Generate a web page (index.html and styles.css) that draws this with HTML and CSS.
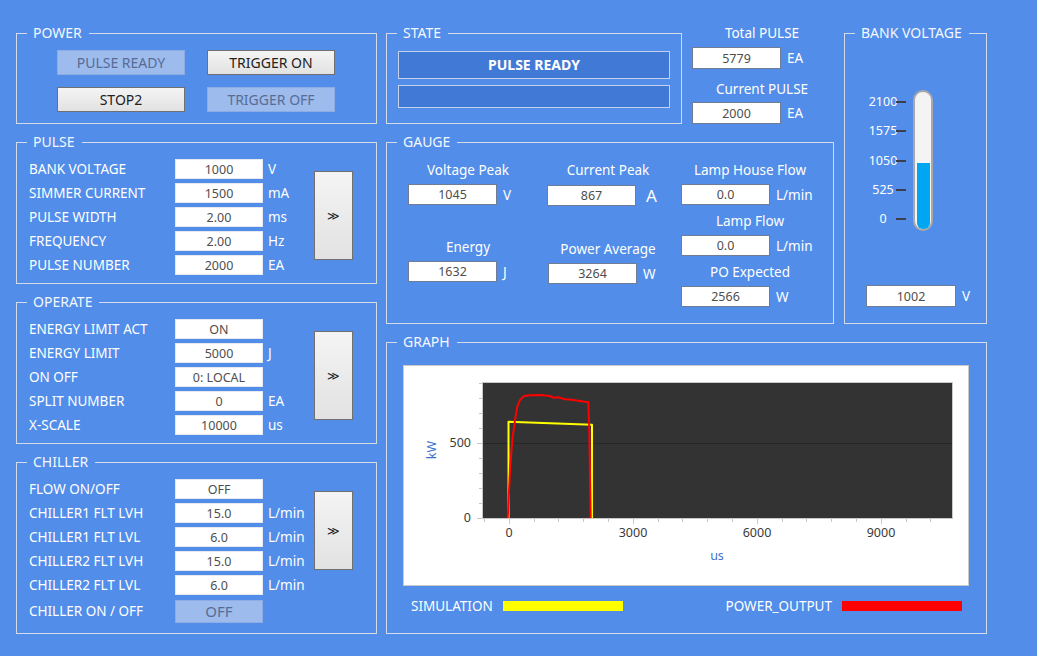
FILE: index.html
```html
<!DOCTYPE html>
<html lang="en">
  <head>
    <meta charset="UTF-8" />
    <meta name="viewport" content="width=device-width, initial-scale=1.0" />
    <title>Pulse Control</title>
    <link rel="stylesheet" href="styles.css">
  </head>
  <body>
    <div class="page">
      <div class="col-left">
        <fieldset class="group power">
          <legend>POWER</legend>
          <div class="power-grid">
            <button class="btn off">PULSE READY</button>
            <button class="btn">TRIGGER ON</button>
            <button class="btn">STOP2</button>
            <button class="btn off">TRIGGER OFF</button>
          </div>
        </fieldset>

        <fieldset class="group pulse">
          <legend>PULSE</legend>
          <div class="params">
            <div class="rows">
              <div class="row"><span>BANK VOLTAGE</span><input type="text" value="1000" readonly /><span class="unit">V</span></div>
              <div class="row"><span>SIMMER CURRENT</span><input type="text" value="1500" readonly /><span class="unit">mA</span></div>
              <div class="row"><span>PULSE WIDTH</span><input type="text" value="2.00" readonly /><span class="unit">ms</span></div>
              <div class="row"><span>FREQUENCY</span><input type="text" value="2.00" readonly /><span class="unit">Hz</span></div>
              <div class="row"><span>PULSE NUMBER</span><input type="text" value="2000" readonly /><span class="unit">EA</span></div>
            </div>
            <button class="btn send">&#8811;</button>
          </div>
        </fieldset>

        <fieldset class="group operate">
          <legend>OPERATE</legend>
          <div class="params">
            <div class="rows">
              <div class="row"><span>ENERGY LIMIT ACT</span><input type="text" value="ON" readonly /><span class="unit"></span></div>
              <div class="row"><span>ENERGY LIMIT</span><input type="text" value="5000" readonly /><span class="unit">J</span></div>
              <div class="row"><span>ON OFF</span><input type="text" value="0: LOCAL" readonly /><span class="unit"></span></div>
              <div class="row"><span>SPLIT NUMBER</span><input type="text" value="0" readonly /><span class="unit">EA</span></div>
              <div class="row"><span>X-SCALE</span><input type="text" value="10000" readonly /><span class="unit">us</span></div>
            </div>
            <button class="btn send">&#8811;</button>
          </div>
        </fieldset>

        <fieldset class="group chiller">
          <legend>CHILLER</legend>
          <div class="params">
            <div class="rows">
              <div class="row"><span>FLOW ON/OFF</span><input type="text" value="OFF" readonly /><span class="unit"></span></div>
              <div class="row"><span>CHILLER1 FLT LVH</span><input type="text" value="15.0" readonly /><span class="unit">L/min</span></div>
              <div class="row"><span>CHILLER1 FLT LVL</span><input type="text" value="6.0" readonly /><span class="unit">L/min</span></div>
              <div class="row"><span>CHILLER2 FLT LVH</span><input type="text" value="15.0" readonly /><span class="unit">L/min</span></div>
              <div class="row"><span>CHILLER2 FLT LVL</span><input type="text" value="6.0" readonly /><span class="unit">L/min</span></div>
              <div class="row last"><span>CHILLER ON / OFF</span><button class="btn off toggle">OFF</button><span class="unit"></span></div>
            </div>
            <button class="btn send short">&#8811;</button>
          </div>
        </fieldset>
      </div>

      <div class="col-right">
        <div class="top-area">
          <div class="mid">
            <div class="state-row">
              <fieldset class="group state">
                <legend>STATE</legend>
                <div class="state-body">
                  <div class="state-bar main">PULSE READY</div>
                  <div class="state-bar"></div>
                </div>
              </fieldset>
              <div class="counters">
                <div class="counter-label">Total PULSE</div>
                <div class="counter-row"><input class="box" type="text" value="5779" readonly /><span>EA</span></div>
                <div class="counter-label second">Current PULSE</div>
                <div class="counter-row tight"><input class="box" type="text" value="2000" readonly /><span>EA</span></div>
              </div>
            </div>

            <fieldset class="group gauge">
              <legend>GAUGE</legend>
              <div class="gauge-body">
                <div class="gcol c1">
                  <div class="field">
                    <div class="glabel">Voltage Peak</div>
                    <div class="gline"><input class="box" type="text" value="1045" readonly /><span>V</span></div>
                  </div>
                  <div class="field far">
                    <div class="glabel">Energy</div>
                    <div class="gline"><input class="box" type="text" value="1632" readonly /><span>J</span></div>
                  </div>
                </div>
                <div class="gcol c2">
                  <div class="field">
                    <div class="glabel">Current Peak</div>
                    <div class="gline"><input class="box" type="text" value="867" readonly /><span class="big">A</span></div>
                  </div>
                  <div class="field far">
                    <div class="glabel">Power Average</div>
                    <div class="gline"><input class="box shift" type="text" value="3264" readonly /><span>W</span></div>
                  </div>
                </div>
                <div class="gcol c3">
                  <div class="field">
                    <div class="glabel">Lamp House Flow</div>
                    <div class="gline"><input class="box" type="text" value="0.0" readonly /><span>L/min</span></div>
                  </div>
                  <div class="field near">
                    <div class="glabel">Lamp Flow</div>
                    <div class="gline"><input class="box" type="text" value="0.0" readonly /><span>L/min</span></div>
                  </div>
                  <div class="field near">
                    <div class="glabel">PO Expected</div>
                    <div class="gline"><input class="box" type="text" value="2566" readonly /><span>W</span></div>
                  </div>
                </div>
              </div>
            </fieldset>
          </div>

          <fieldset class="group bank">
            <legend>BANK VOLTAGE</legend>
            <svg class="thermo" width="141" height="200" viewBox="0 0 141 200">
              <g class="scale-text">
                <text x="38" y="64">2100</text>
                <text x="38" y="93">1575</text>
                <text x="38" y="123">1050</text>
                <text x="38" y="152">525</text>
                <text x="38" y="181">0</text>
              </g>
              <path d="M51 60h10M51 89h10M51 119h10M51 148h10M51 177h10" stroke="#3a3f4a" stroke-width="2" />
              <rect x="69" y="49" width="18" height="139" rx="9" fill="#f4f4f4" stroke="#a9a9a9" stroke-width="2" />
              <rect x="72" y="121" width="13" height="66" rx="6" fill="#00a6f2" />
              <rect x="72" y="121" width="13" height="12" fill="#00a6f2" />
            </svg>
            <div class="bank-row"><input class="box" type="text" value="1002" readonly /><span>V</span></div>
          </fieldset>
        </div>

        <fieldset class="group graph">
          <legend>GRAPH</legend>
          <div class="chart">
            <svg width="566" height="221" viewBox="0 0 566 221">
              <defs>
                <clipPath id="plot-clip"><rect x="80" y="18" width="469" height="135" /></clipPath>
              </defs>
              <rect x="79.5" y="17.5" width="470" height="136" fill="#333333" stroke="#c8c8c8" />
              <path d="M80 78.5h469" stroke="#262626" />
              <path d="M74 153.5h5M74 78.5h5M76 138.5h3M76 123.5h3M76 108.5h3M76 93.5h3M76 63.5h3M76 48.5h3M76 33.5h3M76 18.5h3" stroke="#c8c8c8" />
              <path d="M81.5 154v3M106.5 154v5M131.5 154v3M155.5 154v3M180.5 154v3M205.5 154v3M230.5 154v5M255.5 154v3M279.5 154v3M304.5 154v3M329.5 154v3M354.5 154v5M379.5 154v3M403.5 154v3M428.5 154v3M453.5 154v3M478.5 154v5M503.5 154v3M527.5 154v3" stroke="#c8c8c8" />
              <g class="axis-text">
                <text x="68" y="82" text-anchor="end">500</text>
                <text x="68" y="157" text-anchor="end">0</text>
                <text x="106" y="172" text-anchor="middle">0</text>
                <text x="230" y="172" text-anchor="middle">3000</text>
                <text x="354" y="172" text-anchor="middle">6000</text>
                <text x="478" y="172" text-anchor="middle">9000</text>
              </g>
              <text class="axis-title" x="0" y="0" text-anchor="middle" transform="translate(33 85) rotate(-90)">kW</text>
              <text class="axis-title" x="314" y="195" text-anchor="middle">us</text>
              <g clip-path="url(#plot-clip)" fill="none" stroke-width="2" stroke-linejoin="round">
                <polyline stroke="#ffff00" points="105.5,154 105.5,56.7 189,59.7 189,154" />
                <polyline stroke="#ff0000" points="104.7,154 107,105 109.3,75 112,55 114.3,41.7 117,35 121,31 127,30.3 137,30 147,31 150.3,32.7 155.3,32.3 162,34.3 168.7,34.7 177,36 183.7,37 185.3,37 186.3,65 187.7,154" />
              </g>
            </svg>
          </div>
          <div class="legend">
            <div class="legend-item"><span>SIMULATION</span><i class="swatch sim"></i></div>
            <div class="legend-item"><span>POWER_OUTPUT</span><i class="swatch out"></i></div>
          </div>
        </fieldset>
      </div>
    </div>
  </body>
</html>
```

FILE: styles.css
```css
body {
  margin: 0;
  width: 1037px;
  height: 656px;
  overflow: hidden;
  background-color: #518de9;
  font-family: "Noto Sans", "Open Sans", sans-serif;
  font-size: 13.5px;
  color: #ffffff;
}

.page {
  display: flex;
  gap: 9px;
  padding: 24px 0 0 16px;
}

/* group boxes */

.group {
  margin: 0;
  padding: 0;
  min-width: 0;
  box-sizing: border-box;
  border: 1px solid #d3dbe7;
}

.group legend {
  margin-left: 10px;
  padding: 0 7px 0 6px;
  font-size: 14px;
  line-height: 18px;
  color: #f4f7ff;
}

.col-left {
  width: 361px;
  display: flex;
  flex-direction: column;
  gap: 9px;
}

.power { height: 100px; }
.pulse, .operate { height: 151px; }
.chiller { height: 181px; }

.col-right {
  width: 601px;
  display: flex;
  flex-direction: column;
  gap: 9px;
}

.top-area {
  display: flex;
  gap: 10px;
  height: 300px;
}

.mid {
  width: 448px;
  display: flex;
  flex-direction: column;
  gap: 9px;
}

.state-row {
  display: flex;
  height: 100px;
}

.state { width: 296px; height: 100px; }
.gauge { height: 191px; }
.bank { width: 143px; height: 300px; }
.graph { height: 301px; }

/* buttons and boxes */

.btn {
  box-sizing: border-box;
  padding: 0;
  font-family: inherit;
  font-size: 14px;
  color: #222222;
  background: linear-gradient(#f4f4f4, #e2e2e2);
  border: 1px solid #707070;
  border-radius: 0;
}

.btn.off {
  background: #9dbbed;
  border: 1px solid #8cace3;
  color: #586c94;
}

input {
  box-sizing: border-box;
  height: 20px;
  padding: 0;
  margin: 0;
  font-family: inherit;
  font-size: 12.5px;
  color: #4e4e4e;
  text-align: center;
  background: #ffffff;
  border: 1px solid #e3e8f1;
  outline: none;
}

input.box {
  height: 22px;
  border: 1px solid #6f7c93;
}

.power-grid {
  display: grid;
  grid-template-columns: 128px 128px;
  grid-auto-rows: 25px;
  column-gap: 22px;
  row-gap: 12px;
  padding: 8px 0 0 40px;
}

/* parameter lists */

.params {
  display: flex;
  padding: 6px 0 0 12px;
}

.rows {
  width: 285px;
}

.row {
  display: grid;
  grid-template-columns: 146px 88px 1fr;
  align-items: center;
  height: 24px;
}

.row input {
  width: 88px;
}

.row .unit {
  padding-left: 5px;
}

.row.last {
  height: 28px;
}

.toggle {
  height: 23px;
  font-size: 15px;
  color: #50607e;
}

.send {
  width: 39px;
  height: 89px;
  margin-top: 14px;
  font-size: 12px;
}

.send.short {
  height: 79px;
}

/* state */

.state-body {
  padding: 9px 0 0 11px;
}

.state-bar {
  box-sizing: border-box;
  width: 272px;
  height: 23px;
  margin-top: 6px;
  background: #417ad6;
  border: 1px solid #c6d2e8;
}

.state-bar.main {
  height: 28px;
  margin-top: 0;
  font-size: 14px;
  font-weight: bold;
  line-height: 26px;
  text-align: center;
}

.counters {
  width: 140px;
  margin-left: 10px;
}

.counter-label {
  line-height: 18px;
  text-align: center;
}

.counter-label.second {
  margin-top: 11px;
}

.counter-row {
  display: flex;
  align-items: center;
  gap: 6px;
  margin-top: 5px;
}

.counter-row.tight {
  margin-top: 4px;
}

.counter-row input {
  width: 89px;
}

/* gauge */

.gauge-body {
  display: flex;
  padding: 10px 0 0 21px;
}

.gcol.c1 { width: 120px; }
.gcol.c2 { width: 122px; margin-left: 19px; }
.gcol.c3 { width: 138px; margin-left: 12px; }

.glabel {
  line-height: 18px;
  text-align: center;
  white-space: nowrap;
}

.gline {
  display: flex;
  align-items: center;
  gap: 6px;
  margin-top: 5px;
}

.gline input {
  width: 89px;
  height: 21px;
}

.gline input.shift {
  margin-left: 1px;
}

.gline .big {
  margin-left: 4px;
  font-size: 17px;
}

.field.far {
  margin-top: 33px;
}

.field.near {
  margin-top: 7px;
}

/* bank voltage */

.thermo {
  display: block;
}

.scale-text text {
  font-size: 12.5px;
  fill: #ffffff;
  text-anchor: middle;
}

.bank-row {
  display: flex;
  align-items: center;
  gap: 6px;
  margin: 43px 0 0 21px;
}

.bank-row input {
  width: 90px;
}

/* graph */

.chart {
  width: 566px;
  height: 221px;
  margin: 14px 0 0 16px;
  box-sizing: border-box;
  background: #ffffff;
  border: 1px solid #c9c9c9;
}

.chart svg {
  display: block;
  margin: -1px 0 0 -1px;
}

.axis-text text {
  font-size: 12.5px;
  fill: #3b3b3b;
}

.axis-title {
  font-size: 12.5px;
  fill: #3c72cf;
}

.legend {
  display: flex;
  justify-content: space-between;
  padding: 0 24px 0 24px;
  margin-top: 11px;
}

.legend-item {
  display: flex;
  align-items: center;
  gap: 10px;
  line-height: 18px;
}

.swatch {
  display: block;
  width: 120px;
  height: 10px;
}

.swatch.sim { background: #ffff00; }
.swatch.out { background: #ff0000; }
```
